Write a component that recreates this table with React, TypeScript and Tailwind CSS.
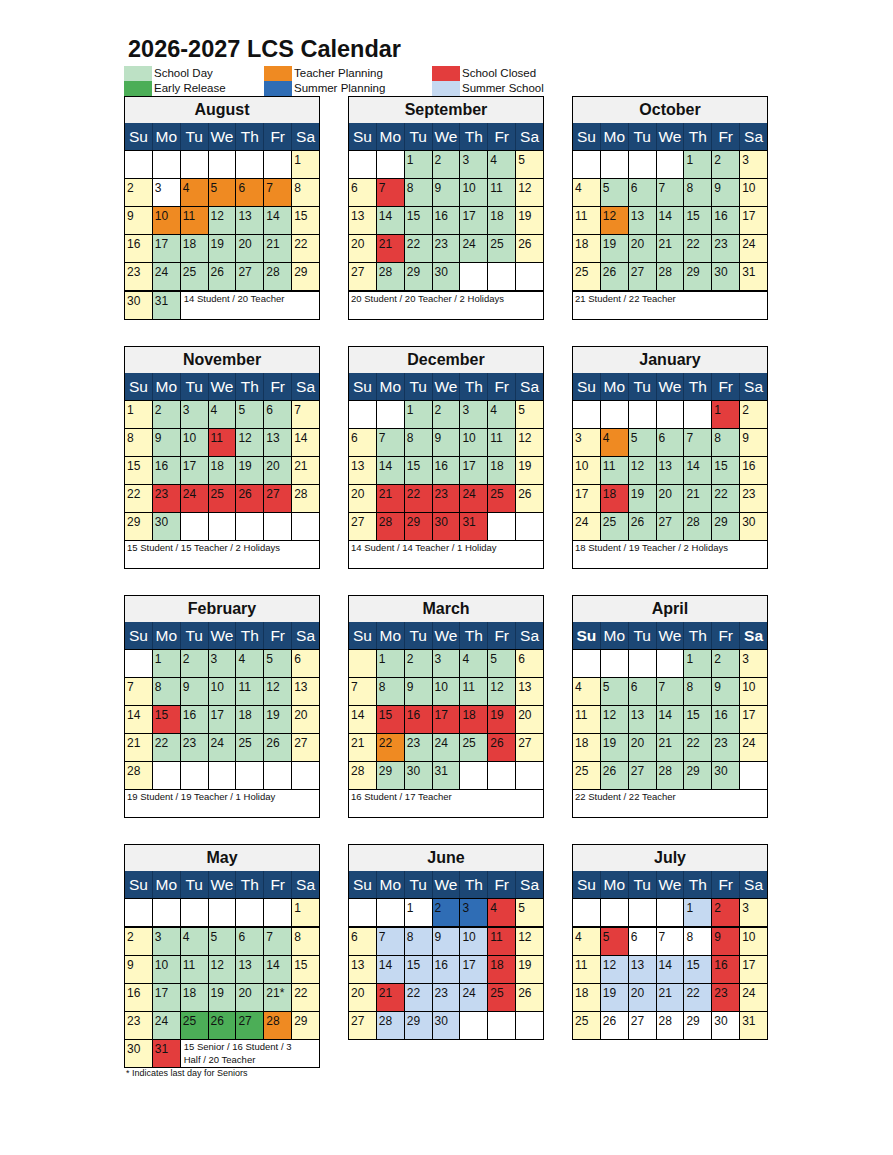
import React from "react";

type Month = {
  name: string;
  start: number;
  days: number;
  rows: string;
  footer?: string;
  thick?: number; // row index whose top line is heavier (5 = footer for 5-row months)
  boldEnds?: boolean;
  labels?: Record<number, string>;
};

const fills: Record<string, string> = {
  w: "bg-white",
  y: "bg-[#fff9c4]",
  g: "bg-[#bde1c5]",
  e: "bg-[#4cae57]",
  o: "bg-[#ef8a22]",
  r: "bg-[#e33d3d]",
  b: "bg-[#2f6db5]",
  l: "bg-[#c5d9f1]",
};

const months: Month[] = [
  { name: "August", start: 6, days: 31, rows: "wwwwwwy ywooooy yoogggy ygggggy ygggggy yg", footer: "14 Student / 20 Teacher", thick: 5 },
  { name: "September", start: 2, days: 30, rows: "wwggggy yrggggy ygggggy yrggggy ygggwww", footer: "20 Student / 20 Teacher / 2 Holidays", thick: 5 },
  { name: "October", start: 4, days: 31, rows: "wwwwggy ygggggy yoggggy ygggggy ygggggy", footer: "21 Student / 22 Teacher", thick: 5 },
  { name: "November", start: 0, days: 30, rows: "ygggggy yggrggy ygggggy yrrrrry ygwwwww", footer: "15 Student / 15 Teacher / 2 Holidays" },
  { name: "December", start: 2, days: 31, rows: "wwggggy ygggggy ygggggy yrrrrry yrrrrww", footer: "14 Sudent / 14 Teacher / 1 Holiday" },
  { name: "January", start: 5, days: 30, rows: "wwwwwry yoggggy ygggggy yrggggy ygggggy", footer: "18 Student / 19 Teacher / 2 Holidays" },
  { name: "February", start: 1, days: 28, rows: "wgggggy ygggggy yrggggy ygggggy ywwwwww", footer: "19 Student / 19 Teacher / 1 Holiday" },
  { name: "March", start: 1, days: 31, rows: "ygggggy ygggggy yrrrrry yogggry ygggwww", footer: "16 Student / 17 Teacher" },
  { name: "April", start: 4, days: 30, rows: "wwwwggy ygggggy ygggggy ygggggy ygggggw", footer: "22 Student / 22 Teacher", boldEnds: true },
  { name: "May", start: 6, days: 31, rows: "wwwwwwy ygggggy ygggggy ygggggy ygeeeoy yr", footer: "15 Senior / 16 Student / 3\nHalf / 20 Teacher", thick: 1, labels: { 21: "21*" } },
  { name: "June", start: 2, days: 30, rows: "wwwbbry yllllry yllllry yrlllry ylllwww", thick: 1 },
  { name: "July", start: 4, days: 31, rows: "wwwwlry yrwwwry yllllry yllllry ywwwwwy", thick: 1 },
];

const weekdays = ["Su", "Mo", "Tu", "We", "Th", "Fr", "Sa"];

const legend = [
  { label: "School Day", fill: "bg-[#bde1c5]" },
  { label: "Teacher Planning", fill: "bg-[#ef8a22]" },
  { label: "School Closed", fill: "bg-[#e33d3d]" },
  { label: "Early Release", fill: "bg-[#4cae57]" },
  { label: "Summer Planning", fill: "bg-[#2f6db5]" },
  { label: "Summer School", fill: "bg-[#c5d9f1]" },
];

function MonthBox({ m }: { m: Month }) {
  const rows = m.rows.split(" ");
  const footerOwnRow = m.footer && rows[rows.length - 1].length === 7;

  return (
    <div className="border border-black">
      <div className="flex h-[26px] items-center justify-center bg-[#f1f1f1] text-[16px] font-bold">{m.name}</div>
      <div className="grid h-[27px] grid-cols-7 gap-px bg-[#12345a]">
        {weekdays.map((d, i) => (
          <div
            key={d}
            className={`flex items-center justify-center bg-[#1c4775] text-[15.5px] text-white ${m.boldEnds && (i === 0 || i === 6) ? "font-bold" : ""}`}
          >
            {d}
          </div>
        ))}
      </div>
      <div className="bg-black">
        {rows.map((row, r) => (
          <div key={r} className={`grid grid-cols-7 gap-px ${m.thick === r ? "pt-[2px]" : "pt-px"}`}>
            {row.split("").map((c, col) => {
              const day = r * 7 + col - m.start + 1;
              const show = day >= 1 && day <= m.days;
              return (
                <div key={col} className={`h-[27px] pl-[2px] pt-[2px] text-[12px] leading-[14px] ${fills[c]}`}>
                  {show ? m.labels?.[day] ?? day : ""}
                </div>
              );
            })}
            {row.length < 7 && m.footer && (
              <div className="col-span-5 h-[27px] whitespace-pre-line bg-white px-[3px] text-[9.5px] leading-[13px]">{m.footer}</div>
            )}
          </div>
        ))}
        {footerOwnRow && (
          <div className={m.thick === 5 ? "pt-[2px]" : "pt-px"}>
            <div className="h-[27px] bg-white px-[2px] pt-px text-[9.5px] leading-[12px]">{m.footer}</div>
          </div>
        )}
      </div>
    </div>
  );
}

export default function App() {
  return (
    <div className="min-h-[1155px] w-[893px] bg-white font-['Liberation_Sans',Arial,sans-serif] text-[#111]">
      <div className="pl-[124px] pt-[35px]">
        <h1 className="pl-[4px] text-[23.5px] font-bold leading-[28px]">2026-2027 LCS Calendar</h1>
        <div className="mt-[3px] grid grid-cols-[140px_168px_auto]">
          {legend.map((l) => (
            <div key={l.label} className="flex h-[15px] items-center">
              <span className={`h-[15px] w-[28px] ${l.fill}`} />
              <span className="pl-[2px] text-[11.5px] leading-[15px]">{l.label}</span>
            </div>
          ))}
        </div>
        <div className="grid w-[644px] grid-cols-[196px_196px_196px] items-start gap-x-[28px] gap-y-[26px]">
          {months.map((m) => (
            <div key={m.name}>
              <MonthBox m={m} />
              {m.name === "May" && <div className="pl-[2px] text-[9px] leading-[10px]">* Indicates last day for Seniors</div>}
            </div>
          ))}
        </div>
      </div>
    </div>
  );
}
